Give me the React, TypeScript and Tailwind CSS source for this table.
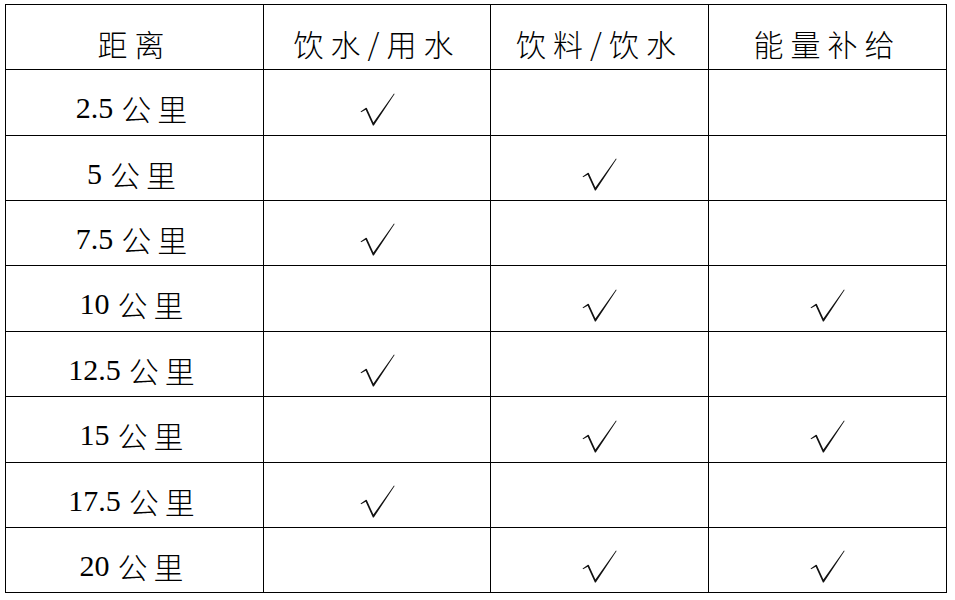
const headers = ["距离", "饮水/用水", "饮料/饮水", "能量补给"];

const rows: { km: string; water: boolean; drink: boolean; energy: boolean }[] = [
  { km: "2.5", water: true, drink: false, energy: false },
  { km: "5", water: false, drink: true, energy: false },
  { km: "7.5", water: true, drink: false, energy: false },
  { km: "10", water: false, drink: true, energy: true },
  { km: "12.5", water: true, drink: false, energy: false },
  { km: "15", water: false, drink: true, energy: true },
  { km: "17.5", water: true, drink: false, energy: false },
  { km: "20", water: false, drink: true, energy: true },
];

const cjk = "font-['Noto_Sans_CJK_SC',sans-serif] font-light";
const serif = "font-['Liberation_Serif','Noto_Sans_CJK_SC',serif]";

function Cell({ children, className = "pt-[11px]" }: { children?: React.ReactNode; className?: string }) {
  return (
    <div className={`flex items-center justify-center bg-white text-[30px] leading-none text-black ${className}`}>
      {children}
    </div>
  );
}

// thin song-style check mark (√)
function CheckMark() {
  return (
    <svg width="35" height="33" viewBox="0 0 35 33" aria-label="√">
      <polygon
        points="0.6,18.6 6,14.8 6.8,15 13.4,29.6 34,0.6 34.6,1.1 13.8,32.5 12.9,32.5 5.7,16.8 1,19.2"
        fill="#111"
      />
    </svg>
  );
}

function Check({ on }: { on: boolean }) {
  return <Cell className="pt-[13px]">{on && <CheckMark />}</Cell>;
}

export default function App() {
  return (
    <div className="h-[600px] w-[955px] bg-white pl-[5px] pt-[4px]">
      <div className="grid w-[942px] grid-cols-[257px_226px_217px_237px] grid-rows-[64px_65px_64px_64px_65px_64px_65px_64px_64px] gap-px border border-black bg-black">
        {headers.map((h) => (
          <Cell key={h}>
            <span className={`${cjk} tracking-[7px]`}>{h}</span>
          </Cell>
        ))}
        {rows.map((r) => (
          <div key={r.km} className="contents">
            <Cell>
              <span className={serif}>{r.km}</span>
              <span className={`${cjk} ml-[8px] tracking-[6px]`}>公里</span>
            </Cell>
            <Check on={r.water} />
            <Check on={r.drink} />
            <Check on={r.energy} />
          </div>
        ))}
      </div>
    </div>
  );
}
